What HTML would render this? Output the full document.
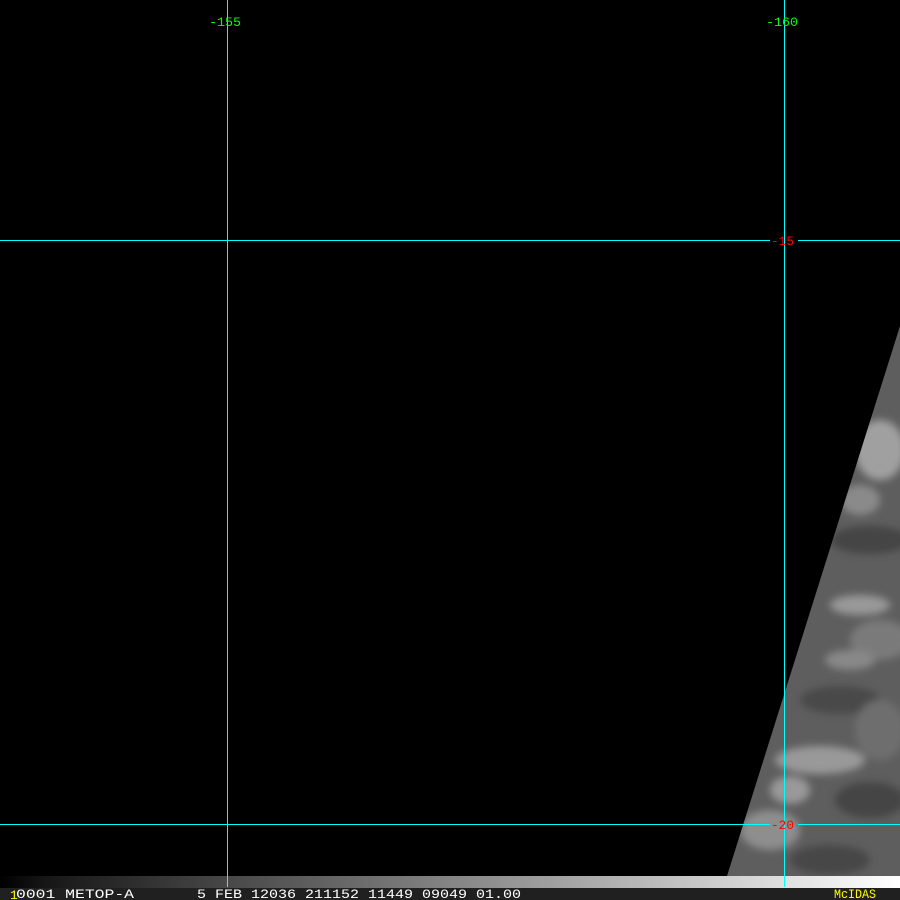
<!DOCTYPE html>
<html><head><style>
html,body{margin:0;padding:0;background:#000;width:900px;height:900px;overflow:hidden}
svg{display:block}
text{font-family:"Liberation Mono",monospace;font-size:13px}
</style></head><body>
<svg width="900" height="900" viewBox="0 0 900 900" xmlns="http://www.w3.org/2000/svg">
<defs>
<clipPath id="sw"><polygon points="900,326 900,876 727,876"/></clipPath>
<filter id="b"><feGaussianBlur stdDeviation="4"/></filter>
<linearGradient id="g" x1="0" x2="1" y1="0" y2="0">
<stop offset="0" stop-color="#000"/><stop offset="0.05" stop-color="#161616"/><stop offset="1" stop-color="#ffffff"/>
</linearGradient>
</defs>
<rect width="900" height="900" fill="#000"/>
<g clip-path="url(#sw)">
<rect x="700" y="320" width="200" height="560" fill="#5e5e5e"/>
<g filter="url(#b)">
<ellipse cx="880" cy="450" rx="25" ry="30" fill="#a0a0a0"/>
<ellipse cx="860" cy="500" rx="20" ry="15" fill="#8a8a8a"/>
<ellipse cx="870" cy="540" rx="40" ry="14" fill="#444"/>
<ellipse cx="860" cy="605" rx="30" ry="10" fill="#999"/>
<ellipse cx="880" cy="640" rx="30" ry="20" fill="#7a7a7a"/>
<ellipse cx="850" cy="660" rx="25" ry="10" fill="#888"/>
<ellipse cx="840" cy="700" rx="40" ry="14" fill="#4a4a4a"/>
<ellipse cx="820" cy="760" rx="45" ry="14" fill="#999"/>
<ellipse cx="880" cy="730" rx="25" ry="30" fill="#6e6e6e"/>
<ellipse cx="870" cy="800" rx="35" ry="18" fill="#444"/>
<ellipse cx="770" cy="830" rx="30" ry="20" fill="#8e8e8e"/>
<ellipse cx="830" cy="860" rx="40" ry="15" fill="#474747"/>
<ellipse cx="790" cy="790" rx="20" ry="14" fill="#999"/>
</g>
</g>
<rect x="0" y="876" width="900" height="12" fill="url(#g)"/>
<rect x="0" y="888" width="900" height="12" fill="#202020"/>
<g stroke="#00ffff" stroke-width="1">
<line x1="227.5" y1="0" x2="227.5" y2="887"/>
<line x1="784.5" y1="0" x2="784.5" y2="887"/>
<line x1="0" y1="240.5" x2="770" y2="240.5"/>
<line x1="798" y1="240.5" x2="900" y2="240.5"/>
<line x1="0" y1="824.5" x2="770" y2="824.5"/>
<line x1="798" y1="824.5" x2="900" y2="824.5"/>
</g>
<g font-size="14">
<text x="209" y="26" fill="#00ff00" textLength="32" lengthAdjust="spacingAndGlyphs">-155</text>
<text x="766" y="26" fill="#00ff00" textLength="32" lengthAdjust="spacingAndGlyphs">-160</text>
<text x="771" y="245" fill="#ff0000" textLength="23" lengthAdjust="spacingAndGlyphs">-15</text>
<text x="771" y="829" fill="#ff0000" textLength="23" lengthAdjust="spacingAndGlyphs">-20</text>
<text x="16" y="898" fill="#ffffff" textLength="118" lengthAdjust="spacingAndGlyphs">0001 METOP-A</text>
<text x="197" y="898" fill="#ffffff" textLength="324" lengthAdjust="spacingAndGlyphs">5 FEB 12036 211152 11449 09049 01.00</text>
<text x="834" y="898" fill="#ffff00" textLength="42" lengthAdjust="spacingAndGlyphs">McIDAS</text>
</g>
<text x="10" y="899" fill="#ffff00" font-size="11">1</text>
</svg>
</body></html>
